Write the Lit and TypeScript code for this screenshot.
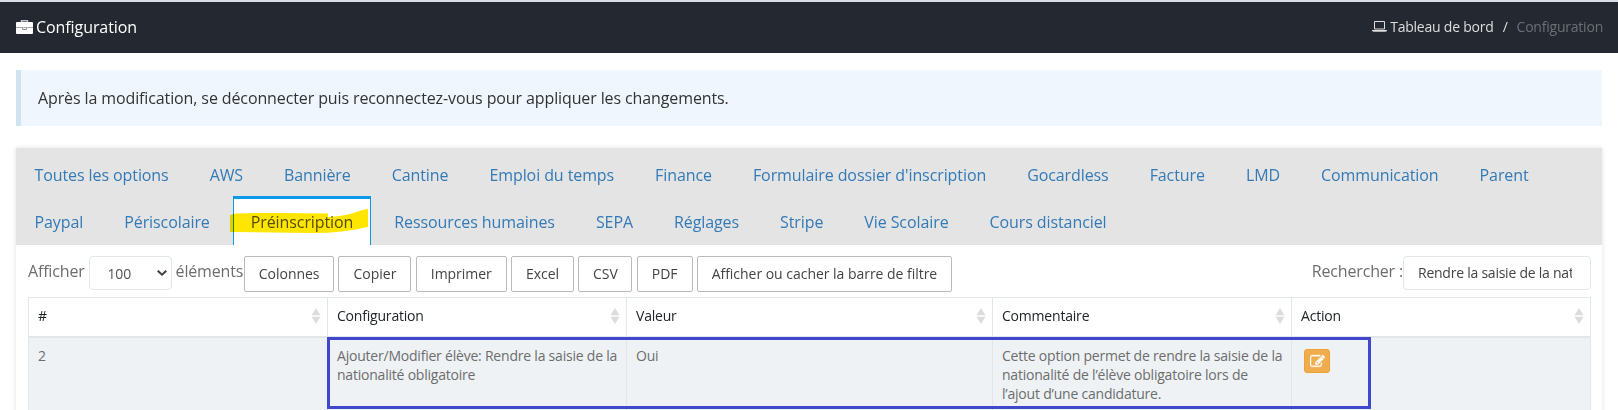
import { LitElement, html, css, svg } from "lit";
import { customElement } from "lit/decorators.js";

const ROW_ONE = ["Toutes les options", "AWS", "Bannière", "Cantine", "Emploi du temps", "Finance", "Formulaire dossier d'inscription", "Gocardless", "Facture", "LMD", "Communication", "Parent"];
const ROW_TWO = ["Paypal", "Périscolaire", "Préinscription", "Ressources humaines", "SEPA", "Réglages", "Stripe", "Vie Scolaire", "Cours distanciel"];
const BUTTONS: [string, number][] = [["Colonnes", 90], ["Copier", 73], ["Imprimer", 91], ["Excel", 63], ["CSV", 54], ["PDF", 56], ["Afficher ou cacher la barre de filtre", 255]];
const COLUMNS = ["#", "Configuration", "Valeur", "Commentaire", "Action"];

const sortIcon = html`<svg class="sort" width="10" height="16" viewBox="0 0 10 16">${svg`<path fill="#dcdcdc" d="M5 0L9.5 7.3H.5zM5 16L.5 8.7h9z"/>`}</svg>`;

@customElement("app-root")
export class AppRoot extends LitElement {
  static styles = css`
    :host { display: block; height: 410px; overflow: hidden; background: #fff; font-family: "Open Sans", sans-serif; font-size: 16px; color: #6d6d6d; }
    * { box-sizing: border-box; }
    .top { height: 53px; border-top: 2px solid #d6dde7; background: #242830; padding: 0 15px 2px 16px; display: flex; align-items: center; justify-content: space-between; color: #fff; }
    .title { display: flex; align-items: center; gap: 3px; letter-spacing: -.08px; }
    .title svg { margin-top: 1px; }
    .crumbs { display: flex; align-items: center; font-size: 14px; color: #ddd; letter-spacing: -.22px; }
    .crumbs svg { margin-right: 3px; }
    .slash { margin: 0 9px; }
    .current { color: #6c7075; }
    .alert { margin: 17px 16px 0; height: 56px; border-left: 5px solid #cfe3f1; background: #eff6fe; padding-left: 17px; line-height: 56px; color: #333; letter-spacing: -.115px; }
    .card { margin: 22px 16px 0; height: 270px; box-shadow: 0 0 5px rgba(0,0,0,.12); background: #fff; }
    .tabs { background: #e4e4e4; height: 97px; padding: 1px 0 0 .5px; letter-spacing: -.09px; }
    .row { display: flex; height: 47px; gap: 5px; color: #337ab7; }
    .tab { position: relative; padding: 0 18px; line-height: 53px; white-space: nowrap; height: 49px; }
    .active { color: #555; background: #fff; border: 1px solid #0a9ae9; border-top-width: 3px; border-bottom: 0; padding: 0 17px; line-height: 47px; }
    .marker { position: absolute; left: -4px; top: 10px; mix-blend-mode: multiply; }
    .tools { display: flex; height: 52px; padding: 11px 11px 0 12px; align-items: flex-start; white-space: nowrap; }
    .label { line-height: 31px; letter-spacing: -.17px; }
    .select { width: 83px; height: 34px; border: 1px solid #e0e6ea; border-radius: 4px; margin: 0 4px 0 4px; padding: 0 4px 0 18px; display: flex; align-items: center; justify-content: space-between; font-size: 14px; letter-spacing: -.2px; color: #555; }
    .buttons { display: flex; gap: 4.3px; margin-left: 1px; }
    .btn { height: 36px; border: 1px solid #bbb; border-radius: 2px; font-size: 14px; line-height: 34px; text-align: center; color: #444; letter-spacing: -.03px; }
    .search { margin-left: auto; display: flex; }
    .input { width: 188px; height: 34px; border: 1px solid #e0e6ea; border-radius: 4px; padding: 0 18px 0 14px; font-size: 14px; line-height: 32px; color: #444; letter-spacing: -.24px; }
    .clip { overflow: hidden; }
    .table { position: relative; margin-left: 12px; width: 1563px; border-left: 1px solid #e0e6ea; border-top: 1px solid #e0e6ea; font-size: 14px; }
    .grid { display: grid; grid-template-columns: 299px 299px 366px 299px 299px; }
    .th { height: 40px; border-right: 1px solid #e0e6ea; border-bottom: 2px solid #e0e6ea; color: #212529; padding: 0 6px 3px 9px; display: flex; align-items: center; justify-content: space-between; letter-spacing: -.2px; }
    .sort { margin-top: 1px; }
    .td { height: 80px; border-right: 1px solid #e0e6ea; background: #eef2f5; padding: 8px 9px; line-height: 19px; white-space: nowrap; letter-spacing: -.215px; }
    .edit { width: 26px; height: 24px; margin: 3px 0 0 3px; border-radius: 3px; border: 1px solid #eea236; background: #f0ad4e; display: flex; align-items: center; justify-content: center; }
    .frame { position: absolute; left: 298px; top: 39px; width: 1044px; height: 72px; border: 3px solid #3f48cc; }
  `;

  private tab(name: string) {
    const on = name === "Préinscription";
    return html`<div class="tab ${on ? "active" : ""}">${name}${on ? html`<svg class="marker" width="140" height="26" viewBox="0 0 140 26"><path fill="#ffe600" d="M0 6L6 4.500Q48 3.300 98 4.500V8Q118 7 132 1L138 0V18Q110 24.500 80 24L0 23z"/></svg>` : ""}</div>`;
  }

  render() {
    return html`
      <header class="top">
        <div class="title">
          <svg width="17" height="14" viewBox="0 0 17 14"><path fill="none" stroke="#c4c6c9" stroke-width="1.500" d="M5.500 3V.8h6V3"/><rect y="2" width="17" height="12" rx="1" fill="#fff"/><path fill="#a9abae" d="M0 7h17v1H0z"/><path fill="none" stroke="#8d8f93" d="M6.500 8v1.500h4V8"/></svg>
          <span>Configuration</span>
        </div>
        <div class="crumbs">
          <svg width="15" height="11" viewBox="0 0 15 11"><path fill="none" stroke="#ddd" d="M3 .5h9.500v7.500H2.500V.5z"/><path fill="#ddd" d="M0 9h15v.8q-.6 1-2 1H2q-1.400 0-2-1z"/></svg>
          <span>Tableau de bord</span><span class="slash">/</span><span class="current">Configuration</span>
        </div>
      </header>
      <div class="alert">Après la modification, se déconnecter puis reconnectez-vous pour appliquer les changements.</div>
      <section class="card">
        <nav class="tabs">
          <div class="row">${ROW_ONE.map((n) => this.tab(n))}</div>
          <div class="row">${ROW_TWO.map((n) => this.tab(n))}</div>
        </nav>
        <div class="tools">
          <span class="label">Afficher</span>
          <div class="select">100<svg width="10" height="6" viewBox="0 0 10 6"><path fill="none" stroke="#444" stroke-width="2" d="M.7.7L5 4.700 9.300.7"/></svg></div>
          <span class="label">éléments</span>
          <div class="buttons">${BUTTONS.map(([t, w]) => html`<div class="btn" style="width:${w}px">${t}</div>`)}</div>
          <div class="search"><span class="label">Rechercher :</span><div class="input"><div class="clip">Rendre la saisie de la nat</div></div></div>
        </div>
        <div class="table">
          <div class="grid">
            ${COLUMNS.map((c) => html`<div class="th">${c}${sortIcon}</div>`)}
            <div class="td">2</div>
            <div class="td">Ajouter/Modifier élève: Rendre la saisie de la<br>nationalité obligatoire</div>
            <div class="td">Oui</div>
            <div class="td">Cette option permet de rendre la saisie de la<br>nationalité de l’élève obligatoire lors de<br>l’ajout d’une candidature.</div>
            <div class="td"><div class="edit"><svg width="15" height="15" viewBox="0 0 1792 1792"><path fill="#fff" stroke="#fff" stroke-width="40" d="M888 1184l116-116-152-152-116 116v56h96v96h56zm440-720q-16-16-33 1l-350 350q-17 17-1 33t33-1l350-350q17-17 1-33zm80 594v190q0 119-84.500 203.500t-203.500 84.500h-832q-119 0-203.500-84.500t-84.500-203.500v-832q0-119 84.500-203.500t203.500-84.500h832q63 0 117 25 15 7 18 23 3 17-9 29l-49 49q-14 14-32 8-23-6-45-6h-832q-66 0-113 47t-47 113v832q0 66 47 113t113 47h832q66 0 113-47t47-113v-126q0-13 9-22l64-64q15-15 35-7t20 29zm-96-738l288 288-672 672h-288v-288zm444 132l-92 92-288-288 92-92q28-28 68-28t68 28l152 152q28 28 28 68t-28 68z"/></svg></div></div>
          </div>
          <div class="frame"></div>
        </div>
      </section>`;
  }
}
